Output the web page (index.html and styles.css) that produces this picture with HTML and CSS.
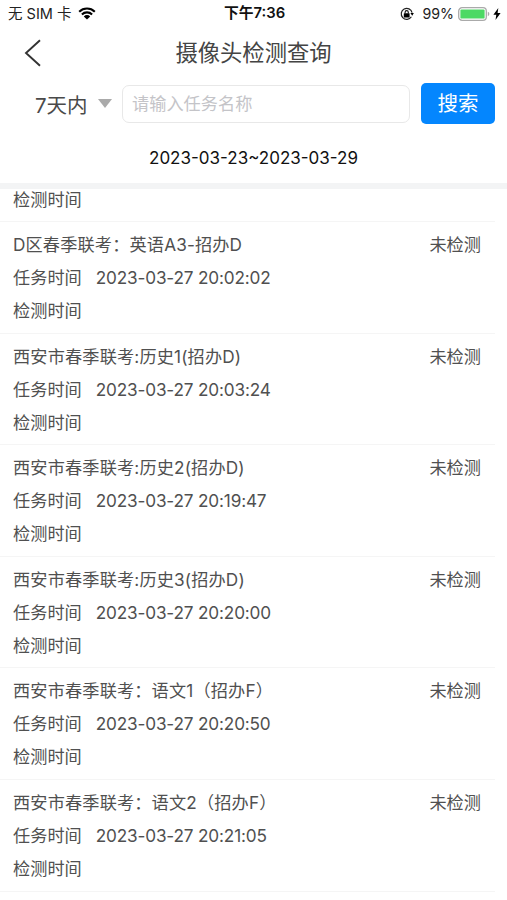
FILE: index.html
```html
<!doctype html>
<html lang="zh-CN">
<head>
<meta charset="utf-8">
<title>摄像头检测查询</title>
<link rel="stylesheet" href="styles.css">
</head>

<body>
<div class="status">
	<div class="status_l">
		<span class="sim">无 SIM 卡</span>
		<svg class="wifi" width="18" height="13" viewBox="0 0 18 13">
			<path d="M1.2 4.7a11.2 11.2 0 0 1 15.6 0M3.9 7.4a7.4 7.4 0 0 1 10.2 0" fill="none" stroke="#000" stroke-width="2.1"/>
			<path d="M9 12.6L5.8 9.4a4.6 4.6 0 0 1 6.4 0z"/>
		</svg>
	</div>
	<div class="time">下午7:36</div>
	<div class="status_r">
		<svg class="lock" width="14" height="14" viewBox="0 0 14 14">
			<path d="M11.4 9.8A5.5 5.5 0 1 1 12.1 5.6" fill="none" stroke="#222" stroke-width="1.2"/>
			<path d="M10.4 6h3.5l-1.7 2.8z"/>
			<rect x="3.8" y="6.2" width="5.8" height="4.2" rx=".5"/>
			<path d="M5.1 6.5V5.2a1.6 1.6 0 0 1 3.2 0v1.3" fill="none" stroke="#111" stroke-width="1.1"/>
		</svg>
		<span class="percent">99%</span>
		<svg class="battery" width="32" height="14" viewBox="0 0 32 14">
			<rect x=".7" y=".7" width="27.6" height="12.6" rx="3.4" fill="#fff" stroke="#aaa" stroke-width="1.3"/>
			<rect x="2.4" y="2.4" width="24.2" height="9.2" rx="1.2" fill="#4cd964"/>
			<path d="M29.8 4.8q1.6.6 1.6 2.2t-1.6 2.2z" fill="#aaa"/>
		</svg>
		<svg class="bolt" width="8" height="12" viewBox="0 0 8 12">
			<path d="M5.3 0L.4 6.8h2.9L2.5 12 7.6 4.9H4.6z"/>
		</svg>
	</div>
</div>

<div class="header">
	<a class="back" href="javascript:;">
		<svg width="18" height="28" viewBox="0 0 18 28">
			<path d="M16 1.2L2 14l14 12.8" fill="none" stroke="#333" stroke-width="1.9"/>
		</svg>
	</a>
	<h1>摄像头检测查询</h1>
</div>

<div class="search">
	<div class="range">7天内<i class="arrow"></i></div>
	<input class="keyword" type="text" placeholder="请输入任务名称">
	<a class="btn" href="javascript:;">搜索</a>
</div>
<div class="date">2023-03-23~2023-03-29</div>

<ul class="list">
	<li class="cut">
		<p>检测时间</p>
	</li>
	<li>
		<p class="name"><b>D区春季联考：英语A3-招办D</b><span>未检测</span></p>
		<p>任务时间<em>2023-03-27 20:02:02</em></p>
		<p>检测时间</p>
	</li>
	<li>
		<p class="name"><b>西安市春季联考:历史1(招办D)</b><span>未检测</span></p>
		<p>任务时间<em>2023-03-27 20:03:24</em></p>
		<p>检测时间</p>
	</li>
	<li>
		<p class="name"><b>西安市春季联考:历史2(招办D)</b><span>未检测</span></p>
		<p>任务时间<em>2023-03-27 20:19:47</em></p>
		<p>检测时间</p>
	</li>
	<li>
		<p class="name"><b>西安市春季联考:历史3(招办D)</b><span>未检测</span></p>
		<p>任务时间<em>2023-03-27 20:20:00</em></p>
		<p>检测时间</p>
	</li>
	<li>
		<p class="name"><b>西安市春季联考：语文1（招办F）</b><span>未检测</span></p>
		<p>任务时间<em>2023-03-27 20:20:50</em></p>
		<p>检测时间</p>
	</li>
	<li>
		<p class="name"><b>西安市春季联考：语文2（招办F）</b><span>未检测</span></p>
		<p>任务时间<em>2023-03-27 20:21:05</em></p>
		<p>检测时间</p>
	</li>
</ul>
</body>
</html>
```
FILE: styles.css
```css
*{ margin:0; padding:0; list-style:none; box-sizing:border-box;}
body{ height:900px; overflow:hidden; background:#fff; color:#505050; font-family:Inter,"Noto Sans CJK SC",sans-serif; display:flex; flex-direction:column;}
a{ text-decoration:none;}
em,i{ font-style:normal;}
b{ font-weight:400;}
svg{ display:block; flex:none;}

.status{ height:27px; padding:0 6px 0 8px; display:grid; grid-template-columns:1fr auto 1fr; align-items:center; font-size:14.5px; line-height:27px; color:#222; white-space:nowrap;}
.status_l,.status_r{ display:flex; align-items:center;}
.status_r{ justify-content:flex-end; font-size:14.2px;}
.wifi{ margin-left:7px;}
.time{ font-size:14.8px; font-weight:600; color:#111;}
.percent{ margin:0 4px 0 8px;}
.bolt{ margin-left:3px;}

.header{ height:50px; display:grid; grid-template-columns:60px 1fr 60px; align-items:center;}
.back{ padding-left:24px;}
.header h1{ font-size:22.3px; font-weight:400; line-height:50px; padding-top:1px; text-align:center; color:#444;}

.search{ height:53px; padding:0 12px 0 35px; display:flex; align-items:center;}
.range{ width:87px; display:flex; align-items:center; font-size:20.5px; color:#4a4a4a; white-space:nowrap;}
.arrow{ margin-left:10px; border:7px solid transparent; border-top:9px solid #aaa; border-bottom:0;}
.keyword{ width:288px; height:38px; padding:0 9px; border:1px solid #e8e8e8; border-radius:7px; outline:none; font-family:inherit; font-size:17.2px; background:#fff;}
.keyword::placeholder{ color:#c4c4c8;}
.btn{ width:74px; height:41px; margin-left:11px; border-radius:5px; background:#0486fe; color:#fff; font-size:20.5px; line-height:41px; text-align:center;}

.date{ height:53px; font-size:17px; line-height:56px; text-align:center; color:#111;}

.list{ flex:1; overflow:hidden; border-top:6px solid #f3f4f5; font-size:17.2px;}
.list li{ width:495px; height:111.6px; padding:6px 14px 0 13px; border-bottom:1px solid #f5f5f5;}
.list li.cut{ height:39px; margin-top:-6px; padding-top:0;}
.list p{ height:33px; line-height:33px; white-space:nowrap;}
.list em{ margin-left:14px; letter-spacing:-.17px;}
.name{ display:flex; justify-content:space-between;}
.name b{ letter-spacing:.14px;}
```
